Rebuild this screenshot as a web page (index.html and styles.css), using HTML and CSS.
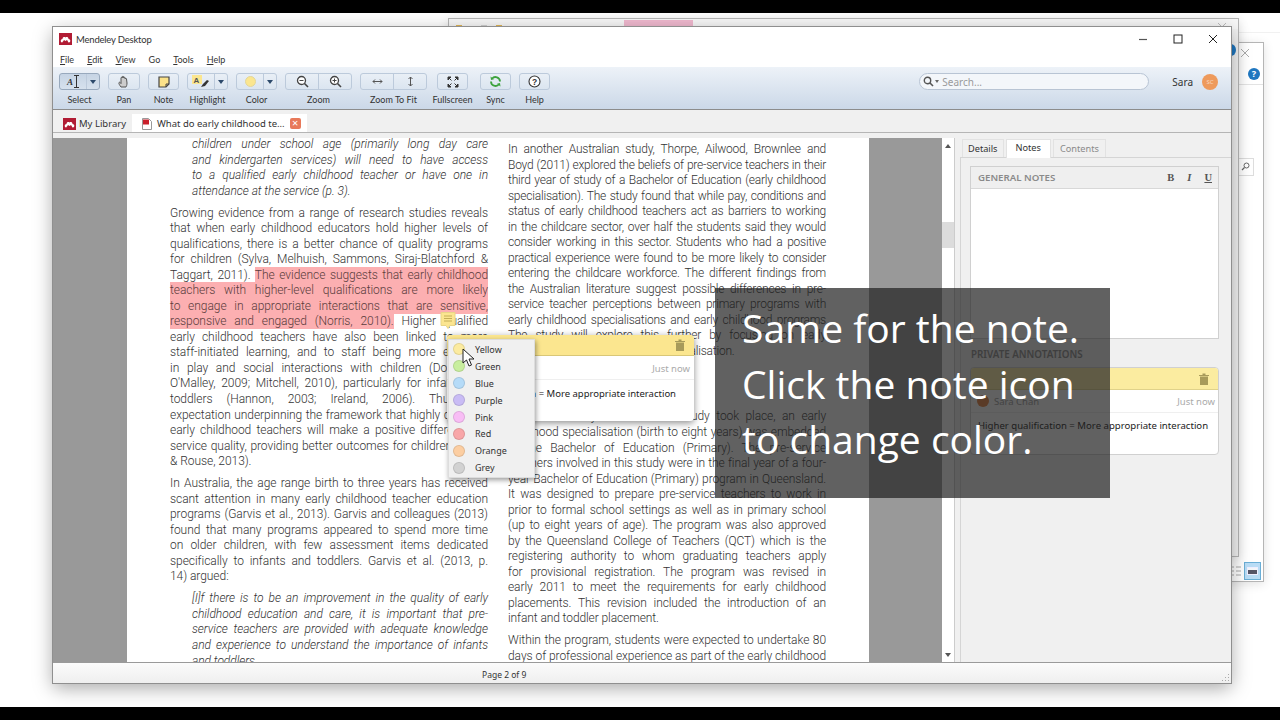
FILE: index.html
```html
<!DOCTYPE html>
<html lang="en">
<head>
    <meta charset="UTF-8">
    <title>Mendeley Desktop</title>
    <link rel="stylesheet" href="styles.css">
</head>
<body>
<div class="screen">
    <div class="black-bar"></div>
    <div class="desktop">

        <!-- Windows behind Mendeley -->
        <div class="bg-far"></div>
        <div class="bg-window bg-back">
            <svg class="bg-close" width="10" height="10" viewBox="0 0 10 10"><path d="M1 1l8 8M9 1l-8 8" stroke="#aaa" fill="none"/></svg>
            <div class="bg-help">?</div>
            <div class="bg-rule"></div>
            <div class="bg-search">
                <svg width="9" height="9" viewBox="0 0 9 9"><circle cx="5.500" cy="3.500" r="2.500" fill="none" stroke="#666"/><path d="M3.500 5.500L1 8" stroke="#666" stroke-width="1.300"/></svg>
            </div>
            <div class="bg-views">
                <svg width="14" height="12" viewBox="0 0 14 12"><path d="M1 2h5M8 2h5M1 6h5M8 6h5M1 10h5M8 10h5" stroke="#aaa" fill="none"/></svg>
                <div class="bg-view-on"><span></span></div>
            </div>
        </div>
        <div class="bg-window bg-front">
            <div class="bg-strip">
                <span class="bg-icon bg-i1"></span>
                <span class="bg-icon bg-i2"></span>
                <span class="bg-icon bg-i3"></span>
                <span class="bg-pink"></span>
                <svg class="bg-x" width="10" height="5" viewBox="0 0 10 5"><path d="M1 0l5 5M9 0L4 5" stroke="#bbb" fill="none"/></svg>
            </div>
            <div class="bg-dot"></div>
        </div>

        <!-- Main window -->
        <div class="window">
            <div class="titlebar">
                <svg class="logo" width="13" height="12" viewBox="0 0 13 12"><rect width="13" height="12" fill="#b11c34"/><path d="M2 9c-1-2 .5-3 1.500-3 0-2 2-2.500 3-1.500 1-1 3-.5 3 1.500 1 0 2.500 1 1.500 3-.8.8-2 .5-2.200-.5H9L8 7 6.500 8 5 7 4 8.500h-.2C3.600 9.500 2.800 9.800 2 9z" fill="#fff"/></svg>
                <span class="title-text">Mendeley Desktop</span>
                <div class="win-controls">
                    <svg width="10" height="10" viewBox="0 0 10 10"><path d="M1 5.500h8" stroke="#555" stroke-width="1.200"/></svg>
                    <svg width="10" height="10" viewBox="0 0 10 10"><rect x="1" y="1" width="8" height="8" fill="none" stroke="#222"/></svg>
                    <svg width="10" height="10" viewBox="0 0 10 10"><path d="M1 1l8 8M9 1l-8 8" stroke="#222" fill="none"/></svg>
                </div>
            </div>
            <div class="menubar">
                <span><u>F</u>ile</span>
                <span><u>E</u>dit</span>
                <span><u>V</u>iew</span>
                <span>Go</span>
                <span><u>T</u>ools</span>
                <span><u>H</u>elp</span>
            </div>

            <div class="toolbar">
                <div class="tool w41">
                    <div class="btn active">
                        <div class="seg grow"><span class="ibeam">A</span><svg width="5" height="13" viewBox="0 0 5 13"><path d="M0 .5h5M0 12.500h5M2.500 .5v12" stroke="#333" fill="none"/></svg></div>
                        <div class="seg caret-seg"><i class="caret"></i></div>
                    </div>
                    <label>Select</label>
                </div>
                <div class="tool w32">
                    <div class="btn"><svg width="12" height="13" viewBox="0 0 12 13"><path d="M3 12C1.500 10 .5 8.500 1 7.500c.5-.6 1.300 0 2 1V3c0-1 1.200-1 1.300 0V2c0-1 1.300-1 1.400 0v1c0-1 1.300-1 1.400 0v1c.1-1 1.300-1 1.400 0l.5 4c0 2-.5 3-1 4z" fill="#ccc" stroke="#555"/></svg></div>
                    <label>Pan</label>
                </div>
                <div class="tool w31">
                    <div class="btn"><svg width="12" height="12" viewBox="0 0 12 12"><path d="M1 1h10v7l-3 3H1z" fill="#fbe28a" stroke="#444" stroke-width="1.200"/><path d="M8 11V8h3" fill="none" stroke="#444"/></svg></div>
                    <label>Note</label>
                </div>
                <div class="tool w41">
                    <div class="btn">
                        <div class="seg grow"><svg width="18" height="13" viewBox="0 0 18 13"><rect x="0" y="0" width="10" height="9" fill="#fbe68f"/><text x="1.500" y="8" font-size="8" font-weight="700" font-family="Liberation Sans" fill="#555">A</text><path d="M9 12l2-3 4-4 2 1-4 5z" fill="#333"/></svg></div>
                        <div class="seg caret-seg"><i class="caret"></i></div>
                    </div>
                    <label>Highlight</label>
                </div>
                <div class="tool w41">
                    <div class="btn">
                        <div class="seg grow"><i class="color-dot"></i></div>
                        <div class="seg caret-seg"><i class="caret"></i></div>
                    </div>
                    <label>Color</label>
                </div>
                <div class="tool w67">
                    <div class="btn">
                        <div class="seg half"><svg width="13" height="13" viewBox="0 0 13 13"><circle cx="5.500" cy="5.500" r="4" fill="#fff" stroke="#444" stroke-width="1.300"/><path d="M8.500 8.500l3.500 3.500" stroke="#444" stroke-width="1.600"/><path d="M3.500 5.500h4" stroke="#444"/></svg></div>
                        <div class="seg half"><svg width="13" height="13" viewBox="0 0 13 13"><circle cx="5.500" cy="5.500" r="4" fill="#fff" stroke="#444" stroke-width="1.300"/><path d="M8.500 8.500l3.500 3.500" stroke="#444" stroke-width="1.600"/><path d="M3.500 5.500h4M5.500 3.500v4" stroke="#444"/></svg></div>
                    </div>
                    <label>Zoom</label>
                </div>
                <div class="tool w67">
                    <div class="btn">
                        <div class="seg half"><svg width="11" height="7" viewBox="0 0 11 7"><path d="M1 3.500h9M3 1.500l-2 2 2 2M8 1.500l2 2-2 2" fill="none" stroke="#555"/></svg></div>
                        <div class="seg half"><svg width="7" height="11" viewBox="0 0 7 11"><path d="M3.500 1v9M1.500 3l2-2 2 2M1.500 8l2 2 2-2" fill="none" stroke="#555"/></svg></div>
                    </div>
                    <label>Zoom To Fit</label>
                </div>
                <div class="tool w31 after-fit">
                    <div class="btn"><svg width="12" height="12" viewBox="0 0 12 12"><path d="M1 1h3L1 4zM11 1H8l3 3zM1 11h3L1 8zM11 11H8l3-3z" fill="#333" stroke="#333"/><path d="M3 3l1.500 1.500M9 3L7.500 4.500M3 9l1.500-1.500M9 9L7.500 7.500" stroke="#333"/></svg></div>
                    <label>Fullscreen</label>
                </div>
                <div class="tool w31 after-full">
                    <div class="btn"><svg width="13" height="13" viewBox="0 0 13 13"><path d="M11 6.500a4.500 4.500 0 0 0-8-2.800M2 6.500a4.500 4.500 0 0 0 8 2.800" fill="none" stroke="#3da23d" stroke-width="1.800"/><path d="M1.500 1.500l.5 3.500 3-.8zM11.500 11.500L11 8l-3 .8z" fill="#3da23d"/></svg></div>
                    <label>Sync</label>
                </div>
                <div class="tool w31">
                    <div class="btn"><svg width="13" height="13" viewBox="0 0 13 13"><circle cx="6.500" cy="6.500" r="5.500" fill="#fff" stroke="#333" stroke-width="1.100"/><text x="6.500" y="9.500" text-anchor="middle" font-size="8.500" font-weight="700" font-family="Liberation Sans" fill="#333">?</text></svg></div>
                    <label>Help</label>
                </div>
                <div class="toolbar-right">
                    <div class="search">
                        <svg width="11" height="11" viewBox="0 0 11 11"><circle cx="4.500" cy="4.500" r="3.200" fill="none" stroke="#555" stroke-width="1.400"/><path d="M7 7l3 3" stroke="#555" stroke-width="1.600"/></svg>
                        <i class="search-caret"></i>
                        <span>Search...</span>
                    </div>
                    <span class="user">Sara</span>
                    <div class="avatar">SC</div>
                </div>
            </div>

            <div class="tabs">
                <div class="tab">
                    <svg class="logo" width="13" height="12" viewBox="0 0 13 12"><rect width="13" height="12" fill="#b11c34"/><path d="M2 9c-1-2 .5-3 1.500-3 0-2 2-2.500 3-1.500 1-1 3-.5 3 1.500 1 0 2.500 1 1.500 3-.8.8-2 .5-2.200-.5H9L8 7 6.500 8 5 7 4 8.500h-.2C3.600 9.500 2.800 9.800 2 9z" fill="#fff"/></svg>
                    My Library
                </div>
                <div class="tab tab-on">
                    <svg width="10" height="12" viewBox="0 0 10 12"><path d="M.5.5h6l3 3v8h-9z" fill="#fff" stroke="#999"/><rect x="1" y="1.500" width="6" height="5" fill="#c9202c"/></svg>
                    <span>What do early childhood te...</span>
                    <div class="tab-close">&times;</div>
                </div>
            </div>

            <div class="main">
                <div class="pdf-area">
                    <div class="page">
                        <div class="col col-left">
                            <div class="quote it">
                                <div class="ln">children under school age (primarily long day care</div>
                                <div class="ln">and kindergarten services) will need to have access</div>
                                <div class="ln">to a qualified early childhood teacher or have one in</div>
                                <div class="ln end">attendance at the service (p. 3).</div>
                            </div>
                            <div class="para">
                                <div class="ln">Growing evidence from a range of research studies reveals</div>
                                <div class="ln">that when early childhood educators hold higher levels of</div>
                                <div class="ln">qualifications, there is a better chance of quality programs</div>
                                <div class="ln">for children (Sylva, Melhuish, Sammons, Siraj-Blatchford &amp;</div>
                                <div class="ln">Taggart, 2011). <span class="hl">The evidence suggests that early childhood</span></div>
                                <div class="ln"><span class="hl">teachers with higher-level qualifications are more likely</span></div>
                                <div class="ln"><span class="hl">to engage in appropriate interactions that are sensitive,</span></div>
                                <div class="ln"><span class="hl">responsive and engaged (Norris, 2010).</span> Higher qualified</div>
                                <div class="ln">early childhood teachers have also been linked to more</div>
                                <div class="ln">staff-initiated learning, and to staff being more engaged</div>
                                <div class="ln">in play and social interactions with children (Downer &amp;</div>
                                <div class="ln">O'Malley, 2009; Mitchell, 2010), particularly for infants and</div>
                                <div class="ln">toddlers (Hannon, 2003; Ireland, 2006). Thus, the</div>
                                <div class="ln">expectation underpinning the framework that highly qualified</div>
                                <div class="ln">early childhood teachers will make a positive difference to</div>
                                <div class="ln">service quality, providing better outcomes for children (Irvine</div>
                                <div class="ln end">&amp; Rouse, 2013).</div>
                            </div>
                            <div class="para">
                                <div class="ln">In Australia, the age range birth to three years has received</div>
                                <div class="ln">scant attention in many early childhood teacher education</div>
                                <div class="ln">programs (Garvis et al., 2013). Garvis and colleagues (2013)</div>
                                <div class="ln">found that many programs appeared to spend more time</div>
                                <div class="ln">on older children, with few assessment items dedicated</div>
                                <div class="ln">specifically to infants and toddlers. Garvis et al. (2013, p.</div>
                                <div class="ln end">14) argued:</div>
                            </div>
                            <div class="para quote it">
                                <div class="ln">[I]f there is to be an improvement in the quality of early</div>
                                <div class="ln">childhood education and care, it is important that pre-</div>
                                <div class="ln">service teachers are provided with adequate knowledge</div>
                                <div class="ln">and experience to understand the importance of infants</div>
                                <div class="ln end">and toddlers.</div>
                            </div>
                        </div>
                        <div class="col col-right">
                            <div class="para tight">
                                <div class="ln">In another Australian study, Thorpe, Ailwood, Brownlee and</div>
                                <div class="ln">Boyd (2011) explored the beliefs of pre-service teachers in their</div>
                                <div class="ln">third year of study of a Bachelor of Education (early childhood</div>
                                <div class="ln">specialisation). The study found that while pay, conditions and</div>
                                <div class="ln">status of early childhood teachers act as barriers to working</div>
                                <div class="ln">in the childcare sector, over half the students said they would</div>
                                <div class="ln">consider working in this sector. Students who had a positive</div>
                                <div class="ln">practical experience were found to be more likely to consider</div>
                                <div class="ln">entering the childcare workforce. The different findings from</div>
                                <div class="ln">the Australian literature suggest possible differences in pre-</div>
                                <div class="ln">service teacher perceptions between primary programs with</div>
                                <div class="ln">early childhood specialisations and early childhood programs</div>
                                <div class="ln">The study will explore this further by focusing on early</div>
                                <div class="ln end">programs with early childhood specialisation.</div>
                            </div>
                            <div class="para para-study">
                                <div class="ln">In the university in which this study took place, an early</div>
                                <div class="ln">childhood specialisation (birth to eight years) was embedded</div>
                                <div class="ln">in the Bachelor of Education (Primary). The pre-service</div>
                                <div class="ln">teachers involved in this study were in the final year of a four-</div>
                                <div class="ln">year Bachelor of Education (Primary) program in Queensland.</div>
                                <div class="ln">It was designed to prepare pre-service teachers to work in</div>
                                <div class="ln">prior to formal school settings as well as in primary school</div>
                                <div class="ln">(up to eight years of age). The program was also approved</div>
                                <div class="ln">by the Queensland College of Teachers (QCT) which is the</div>
                                <div class="ln">registering authority to whom graduating teachers apply</div>
                                <div class="ln">for provisional registration. The program was revised in</div>
                                <div class="ln">early 2011 to meet the requirements for early childhood</div>
                                <div class="ln">placements. This revision included the introduction of an</div>
                                <div class="ln end">infant and toddler placement.</div>
                            </div>
                            <div class="para">
                                <div class="ln">Within the program, students were expected to undertake 80</div>
                                <div class="ln">days of professional experience as part of the early childhood</div>
                            </div>
                        </div>
                    </div>
                </div>
                <div class="scrollbar">
                    <i class="arrow-up"></i>
                    <div class="thumb"></div>
                    <i class="arrow-down"></i>
                </div>
                <div class="side">
                    <div class="side-tabs">
                        <div class="side-tab">Details</div>
                        <div class="side-tab side-tab-on">Notes</div>
                        <div class="side-tab side-tab-off">Contents</div>
                    </div>
                    <div class="side-body">
                        <div class="general">
                            <div class="general-head">
                                <span>GENERAL NOTES</span>
                                <div class="format"><b>B</b><i>I</i><u>U</u></div>
                            </div>
                            <div class="general-body"></div>
                        </div>
                        <div class="private-title">PRIVATE ANNOTATIONS</div>
                        <div class="note-card">
                            <div class="note-head">
                                <svg class="trash" width="10" height="12" viewBox="0 0 10 12"><path d="M0 2h10v1H0zM3.500 .5h3V2h-3zM1 3.500h8V12H1z" fill="#a89b5a"/></svg>
                            </div>
                            <div class="note-meta">
                                <i class="note-avatar"></i>
                                <span class="note-name">Sara Chan</span>
                                <span class="note-time">Just now</span>
                            </div>
                            <div class="note-text">Higher qualification = More appropriate interaction</div>
                        </div>
                    </div>
                </div>
            </div>

            <div class="statusbar">
                <span>Page 2 of 9</span>
                <svg class="grip" width="9" height="9" viewBox="0 0 9 9"><path d="M7 1h1v1H7zM4 4h1v1H4zM7 4h1v1H7zM1 7h1v1H1zM4 7h1v1H4zM7 7h1v1H7z" fill="#aaa"/></svg>
            </div>
        </div>

        <!-- Note popup opened on the page -->
        <div class="pin">
            <svg width="16" height="18" viewBox="0 0 16 18"><path d="M1 .5h14v13H10l-2 3-2-3H1z" fill="#fbe58f" stroke="#e8d587"/><path d="M4 4h8M4 6.500h8M4 9h8" stroke="#c4ae58"/></svg>
        </div>
        <div class="popup">
            <div class="popup-head">
                <svg class="trash" width="10" height="12" viewBox="0 0 10 12"><path d="M0 2h10v1H0zM3.500 .5h3V2h-3zM1 3.500h8V12H1z" fill="#a89b5a"/></svg>
            </div>
            <div class="popup-meta">Just now</div>
            <div class="popup-text">Higher qualification = More appropriate interaction</div>
        </div>
        <div class="color-menu">
            <div class="color-item"><i class="swatch yellow"></i>Yellow</div>
            <div class="color-item"><i class="swatch green"></i>Green</div>
            <div class="color-item"><i class="swatch blue"></i>Blue</div>
            <div class="color-item"><i class="swatch purple"></i>Purple</div>
            <div class="color-item"><i class="swatch pink"></i>Pink</div>
            <div class="color-item"><i class="swatch red"></i>Red</div>
            <div class="color-item"><i class="swatch orange"></i>Orange</div>
            <div class="color-item"><i class="swatch grey"></i>Grey</div>
        </div>
        <svg class="cursor" width="13" height="19" viewBox="0 0 13 19"><path d="M1 1v14l3.500-3 2.500 6 2.500-1-2.500-6H12z" fill="#fff" stroke="#222"/></svg>

        <!-- Video caption -->
        <div class="caption">Same for the note.<br>Click the note icon<br>to change color.</div>
    </div>
    <div class="black-bar"></div>
</div>
</body>
</html>
```

FILE: styles.css
```css
* {
    margin: 0;
    padding: 0;
    box-sizing: border-box;
}

body {
    font-family: "Noto Sans", sans-serif;
    background-color: #000;
    overflow: hidden;
}

.screen {
    width: 1280px;
    height: 720px;
    display: flex;
    flex-direction: column;
}

.black-bar {
    height: 13px;
    background-color: #000;
}

.desktop {
    flex: 1;
    position: relative;
    background-color: #fff;
    overflow: hidden;
}

/* Windows behind */
.bg-far {
    position: absolute;
    left: 1238px;
    right: 0;
    top: 19px;
    border-top: 1px solid #f1f1f1;
}

.bg-window {
    position: absolute;
    background-color: #fff;
    border: 1px solid #b5b5b5;
    box-shadow: 0 2px 10px rgba(0, 0, 0, 0.12);
}

.bg-back {
    left: 1100px;
    top: 29px;
    width: 164px;
    height: 540px;
}

.bg-close {
    position: absolute;
    left: 139px;
    top: 5px;
}

.bg-help {
    position: absolute;
    left: 147px;
    top: 25px;
    width: 12px;
    height: 12px;
    border-radius: 50%;
    background-color: #1f77c0;
    color: #fff;
    font-size: 9px;
    font-weight: 700;
    line-height: 12px;
    text-align: center;
}

.bg-rule {
    position: absolute;
    left: 0;
    right: 0;
    top: 41px;
    border-top: 1px solid #e3e3e3;
}

.bg-search {
    position: absolute;
    left: 129px;
    top: 115px;
    width: 24px;
    height: 18px;
    padding: 3px 0 0 10px;
    border: 1px solid #ddd;
    line-height: 0;
}

.bg-views {
    position: absolute;
    right: 2px;
    bottom: 1px;
    display: flex;
    align-items: center;
    gap: 2px;
}

.bg-view-on {
    width: 17px;
    height: 18px;
    background-color: #b9dcf5;
    border: 1px solid #6aaed6;
    padding: 4px 2px;
}

.bg-view-on span {
    display: block;
    height: 8px;
    background: linear-gradient(#f4f6f8 40%, #556 40%);
    border: 1px solid #eef;
}

.bg-front {
    left: 448px;
    top: 5px;
    width: 791px;
    height: 539px;
    background-color: #f2f2f2;
}

.bg-strip {
    position: relative;
    height: 10px;
    background-color: #f7f7f7;
}

.bg-icon {
    position: absolute;
    top: 6px;
    width: 6px;
    height: 3px;
}

.bg-i1 { left: 7px; background-color: #e3b654; }
.bg-i2 { left: 32px; background-color: #d0d0d0; }
.bg-i3 { left: 47px; background-color: #e3b654; }

.bg-pink {
    position: absolute;
    left: 175px;
    top: 1px;
    width: 69px;
    height: 8px;
    background-color: #f0b9cf;
}

.bg-x {
    position: absolute;
    left: 768px;
    top: 4px;
}

.bg-dot {
    position: absolute;
    left: 777px;
    top: 25px;
    width: 10px;
    height: 12px;
    border-radius: 50%;
    background-color: #1f77c0;
}

/* Main window */
.window {
    position: absolute;
    left: 53px;
    top: 14px;
    width: 1178px;
    height: 656px;
    display: flex;
    flex-direction: column;
    background-color: #f0f0f0;
    outline: 1px solid #8f8f8f;
    box-shadow: 0 5px 18px rgba(0, 0, 0, 0.35);
}

.titlebar {
    height: 23px;
    flex: none;
    display: flex;
    align-items: center;
    padding: 1px 0 0 6px;
    background-color: #fff;
}

.logo {
    flex: none;
}

.title-text {
    margin-left: 4px;
    font-family: Lato, sans-serif;
    font-size: 9.500px;
    letter-spacing: -0.200px;
    color: #333;
}

.win-controls {
    margin-left: auto;
    display: flex;
    gap: 25px;
    padding-right: 13px;
}

.menubar {
    height: 17px;
    flex: none;
    display: flex;
    align-items: center;
    gap: 13px;
    padding: 1px 0 0 7px;
    background-color: #fff;
    font-family: Lato, sans-serif;
    font-size: 9px;
    color: #333;
}

/* Toolbar */
.toolbar {
    height: 43px;
    flex: none;
    display: flex;
    gap: 8px;
    padding: 6px 0 0 6px;
    background: linear-gradient(#edf2f8, #cbd8e8);
    border-bottom: 1px solid #8c8c8c;
}

.tool {
    display: flex;
    flex-direction: column;
    align-items: center;
    gap: 4px;
}

.tool label {
    font-family: Lato, sans-serif;
    font-size: 9px;
    line-height: 12px;
    color: #333;
    white-space: nowrap;
}

.w31 { width: 31px; }
.w32 { width: 32px; }
.w41 { width: 41px; }
.w67 { width: 67px; }

.after-fit { margin-left: 2px; }
.after-full { margin-left: 4px; }

.btn {
    width: 100%;
    height: 17px;
    display: flex;
    align-items: center;
    justify-content: center;
    border: 1px solid #bccadb;
    border-radius: 3px;
    background: linear-gradient(#e9eff6, #dbe5f0);
}

.btn.active {
    background: linear-gradient(#c6d4e4, #d6e1ed);
    border-color: #98a9bd;
}

.seg {
    height: 100%;
    display: flex;
    align-items: center;
    justify-content: center;
}

.seg.grow {
    flex: 1;
}

.seg.half {
    flex: 1;
}

.seg.half + .seg.half,
.caret-seg {
    border-left: 1px solid #bccadb;
}

.caret-seg {
    width: 13px;
}

.caret {
    width: 0;
    height: 0;
    border-left: 3px solid transparent;
    border-right: 3px solid transparent;
    border-top: 4px solid #2d4a6b;
}

.ibeam {
    font-family: "Liberation Serif", serif;
    font-style: italic;
    font-weight: 700;
    font-size: 9px;
    color: #333;
    margin-right: 1px;
}

.color-dot {
    width: 11px;
    height: 11px;
    border-radius: 50%;
    background-color: #fbe68f;
    border: 1px solid #e2d69a;
}

.toolbar-right {
    margin-left: auto;
    height: 17px;
    display: flex;
    align-items: center;
    padding-right: 13px;
}

.search {
    width: 230px;
    height: 17px;
    display: flex;
    align-items: center;
    padding-left: 3px;
    border: 1px solid #b8c4d4;
    border-radius: 9px;
    background-color: #f3f6fa;
    font-size: 10px;
    color: #9a9a9a;
}

.search-caret {
    width: 0;
    height: 0;
    margin: 0 3px 0 1px;
    border-left: 2px solid transparent;
    border-right: 2px solid transparent;
    border-top: 3px solid #666;
}

.user {
    margin-left: 23px;
    font-size: 10px;
    color: #333;
}

.avatar {
    width: 16px;
    height: 16px;
    margin-left: 9px;
    border-radius: 50%;
    background-color: #ee9a5c;
    color: #f8d8c0;
    font-size: 6px;
    line-height: 16px;
    text-align: center;
}

/* Tabs */
.tabs {
    height: 23px;
    flex: none;
    display: flex;
    align-items: flex-end;
    padding-left: 3px;
    background-color: #f0f0f0;
    border-bottom: 1px solid #b5b5b5;
}

.tab {
    width: 76px;
    height: 18px;
    display: flex;
    align-items: center;
    gap: 3px;
    padding: 1px 0 0 7px;
    font-size: 9.500px;
    color: #333;
    background-color: #f0f0f0;
}

.tab-on {
    width: 175px;
    gap: 5px;
    padding-left: 10px;
    background-color: #fff;
}

.tab-close {
    width: 11px;
    height: 11px;
    border-radius: 2px;
    background-color: #e8795a;
    color: #fff;
    font-size: 11px;
    line-height: 10px;
    text-align: center;
}

/* PDF viewer */
.main {
    height: 525px;
    flex: none;
    margin-top: 5px;
    display: flex;
    border-bottom: 1px solid #9a9a9a;
}

.pdf-area {
    width: 889px;
    flex: none;
    overflow: hidden;
    background-color: #999;
    padding-left: 74px;
}

.page {
    width: 742px;
    height: 100%;
    display: grid;
    grid-template-columns: 318px 318px;
    column-gap: 20px;
    padding-left: 43px;
    overflow: hidden;
    background-color: #fff;
    font-family: Roboto, sans-serif;
    font-weight: 300;
    font-size: 12px;
    line-height: 15.530px;
    letter-spacing: -0.050px;
    color: #333;
}

.col-left {
    margin-top: -1px;
}

.col-right {
    margin-top: 4px;
}

.ln {
    white-space: nowrap;
    text-align: justify;
    text-align-last: justify;
}

.ln.end {
    text-align-last: left;
}

.para {
    margin-top: 6.500px;
}

.col-right .para:first-child {
    margin-top: 0;
}

.tight {
    letter-spacing: -0.220px;
}

.para-study {
    margin-top: 50px;
    letter-spacing: -0.100px;
}

.quote {
    padding-left: 22px;
}

.it {
    font-style: italic;
}

.hl {
    background-color: #fcafb1;
    color: #5a3c3c;
    padding: 1px 0;
}

/* Scrollbar */
.scrollbar {
    width: 13px;
    flex: none;
    position: relative;
    background-color: #fff;
    border-right: 1px solid #ccc;
}

.arrow-up,
.arrow-down {
    position: absolute;
    left: 3px;
    width: 0;
    height: 0;
    border-left: 3px solid transparent;
    border-right: 3px solid transparent;
}

.arrow-up {
    top: 6px;
    border-bottom: 4px solid #555;
}

.arrow-down {
    bottom: 5px;
    border-top: 4px solid #555;
}

.thumb {
    position: absolute;
    left: 0;
    right: 0;
    top: 84px;
    height: 26px;
    background-color: #dcdcdc;
}

/* Side panel */
.side {
    flex: 1;
    margin-left: 5px;
    display: flex;
    flex-direction: column;
}

.side-tabs {
    height: 20px;
    flex: none;
    display: flex;
    align-items: flex-end;
    gap: 2px;
    padding-left: 2px;
    border-bottom: 1px solid #d5d5d5;
}

.side-tab {
    height: 18px;
    padding: 0 5px;
    display: flex;
    align-items: center;
    font-size: 9.200px;
    color: #333;
    background-color: #f0f0f0;
    border: 1px solid #e2e2e2;
    border-bottom: none;
}

.side-tab-on {
    height: 19px;
    margin-bottom: -1px;
    padding: 0 9px 3px;
    background-color: #fff;
}

.side-tab-off {
    padding: 0 6px;
    color: #8a8a8a;
}

.side-body {
    flex: 1;
    padding: 8px 12px 0 9px;
    border-left: 1px solid #d5d5d5;
}

.general {
    height: 173px;
    display: flex;
    flex-direction: column;
    border: 1px solid #d0d0d0;
}

.general-head {
    height: 22px;
    flex: none;
    display: flex;
    align-items: center;
    justify-content: space-between;
    padding: 0 6px 0 7px;
    background-color: #efefef;
    border-bottom: 1px solid #d8d8d8;
    font-size: 9.700px;
    font-weight: 600;
    color: #8a8a8a;
}

.format {
    display: flex;
    gap: 13px;
    font-family: "Liberation Serif", serif;
    font-size: 10.500px;
    color: #555;
}

.general-body {
    flex: 1;
    background-color: #fff;
}

.private-title {
    margin: 10px 0 6px 1px;
    font-size: 9.800px;
    line-height: 12px;
    font-weight: 600;
    color: #8a8a8a;
}

.note-card {
    height: 88px;
    border: 1px solid #d0d0d0;
    border-radius: 4px;
    background-color: #fff;
    overflow: hidden;
}

.note-head {
    height: 22px;
    display: flex;
    align-items: center;
    justify-content: flex-end;
    padding-right: 9px;
    background-color: #fbeca0;
    border-bottom: 1px solid #e0d28a;
}

.note-meta {
    height: 23px;
    display: flex;
    align-items: center;
    padding: 0 3px 0 6px;
    border-bottom: 1px solid #efefef;
    font-size: 9.500px;
}

.note-avatar {
    width: 12px;
    height: 12px;
    border-radius: 50%;
    background-color: #e8803c;
}

.note-name {
    margin-left: 5px;
    color: #999;
}

.note-time {
    margin-left: auto;
    color: #aaa;
}

.note-text {
    padding: 6px 0 0 7px;
    font-size: 9.600px;
    line-height: 13px;
    white-space: nowrap;
    color: #222;
}

/* Status bar */
.statusbar {
    flex: 1;
    position: relative;
    display: flex;
    align-items: center;
    padding: 2px 0 0 429px;
    background: linear-gradient(#fbfbfb, #efefef);
    font-size: 8.500px;
    color: #333;
}

.grip {
    position: absolute;
    right: 1px;
    bottom: 1px;
}

/* Popup on the page */
.pin {
    position: absolute;
    left: 440px;
    top: 299px;
    line-height: 0;
}

.popup {
    position: absolute;
    left: 447px;
    top: 322px;
    width: 247px;
    height: 86px;
    border-radius: 4px;
    background-color: #fff;
    box-shadow: 0 2px 7px rgba(0, 0, 0, 0.45);
    overflow: hidden;
}

.popup-head {
    height: 21px;
    display: flex;
    align-items: center;
    justify-content: flex-end;
    padding-right: 9px;
    background-color: #fbe68f;
    border-bottom: 1px solid #d9c777;
}

.popup-meta {
    height: 24px;
    padding: 6px 4px 0 0;
    border-bottom: 1px solid #efefef;
    text-align: right;
    font-size: 9.500px;
    color: #aaa;
}

.popup-text {
    padding: 7px 18px 0 0;
    text-align: right;
    font-size: 9.500px;
    white-space: nowrap;
    color: #222;
}

.color-menu {
    position: absolute;
    left: 448px;
    top: 326px;
    width: 87px;
    height: 139px;
    display: flex;
    flex-direction: column;
    padding-top: 1px;
    background-color: #f0f0f0;
    border: 1px solid #ddd;
    box-shadow: 1px 2px 5px rgba(0, 0, 0, 0.4);
}

.color-item {
    height: 16.900px;
    flex: none;
    display: flex;
    align-items: center;
    gap: 10px;
    padding-left: 4px;
    font-size: 9px;
    color: #333;
}

.swatch {
    width: 12px;
    height: 12px;
    border-radius: 50%;
    border: 1px solid rgba(0, 0, 0, 0.1);
}

.yellow { background-color: #fceba0; }
.green { background-color: #c8ee9e; }
.blue { background-color: #b5dbf8; }
.purple { background-color: #c9bcf5; }
.pink { background-color: #f8bdf5; }
.red { background-color: #f8a6a8; }
.orange { background-color: #fccea2; }
.grey { background-color: #d2d2d2; }

.cursor {
    position: absolute;
    left: 462px;
    top: 335px;
}

/* Video caption */
.caption {
    position: absolute;
    left: 715px;
    top: 275px;
    width: 395px;
    height: 210px;
    padding: 12px 0 0 27px;
    background-color: rgba(30, 30, 30, 0.7);
    font-family: "Open Sans", sans-serif;
    font-size: 39px;
    line-height: 55.500px;
    color: #fff;
    white-space: nowrap;
}
```
